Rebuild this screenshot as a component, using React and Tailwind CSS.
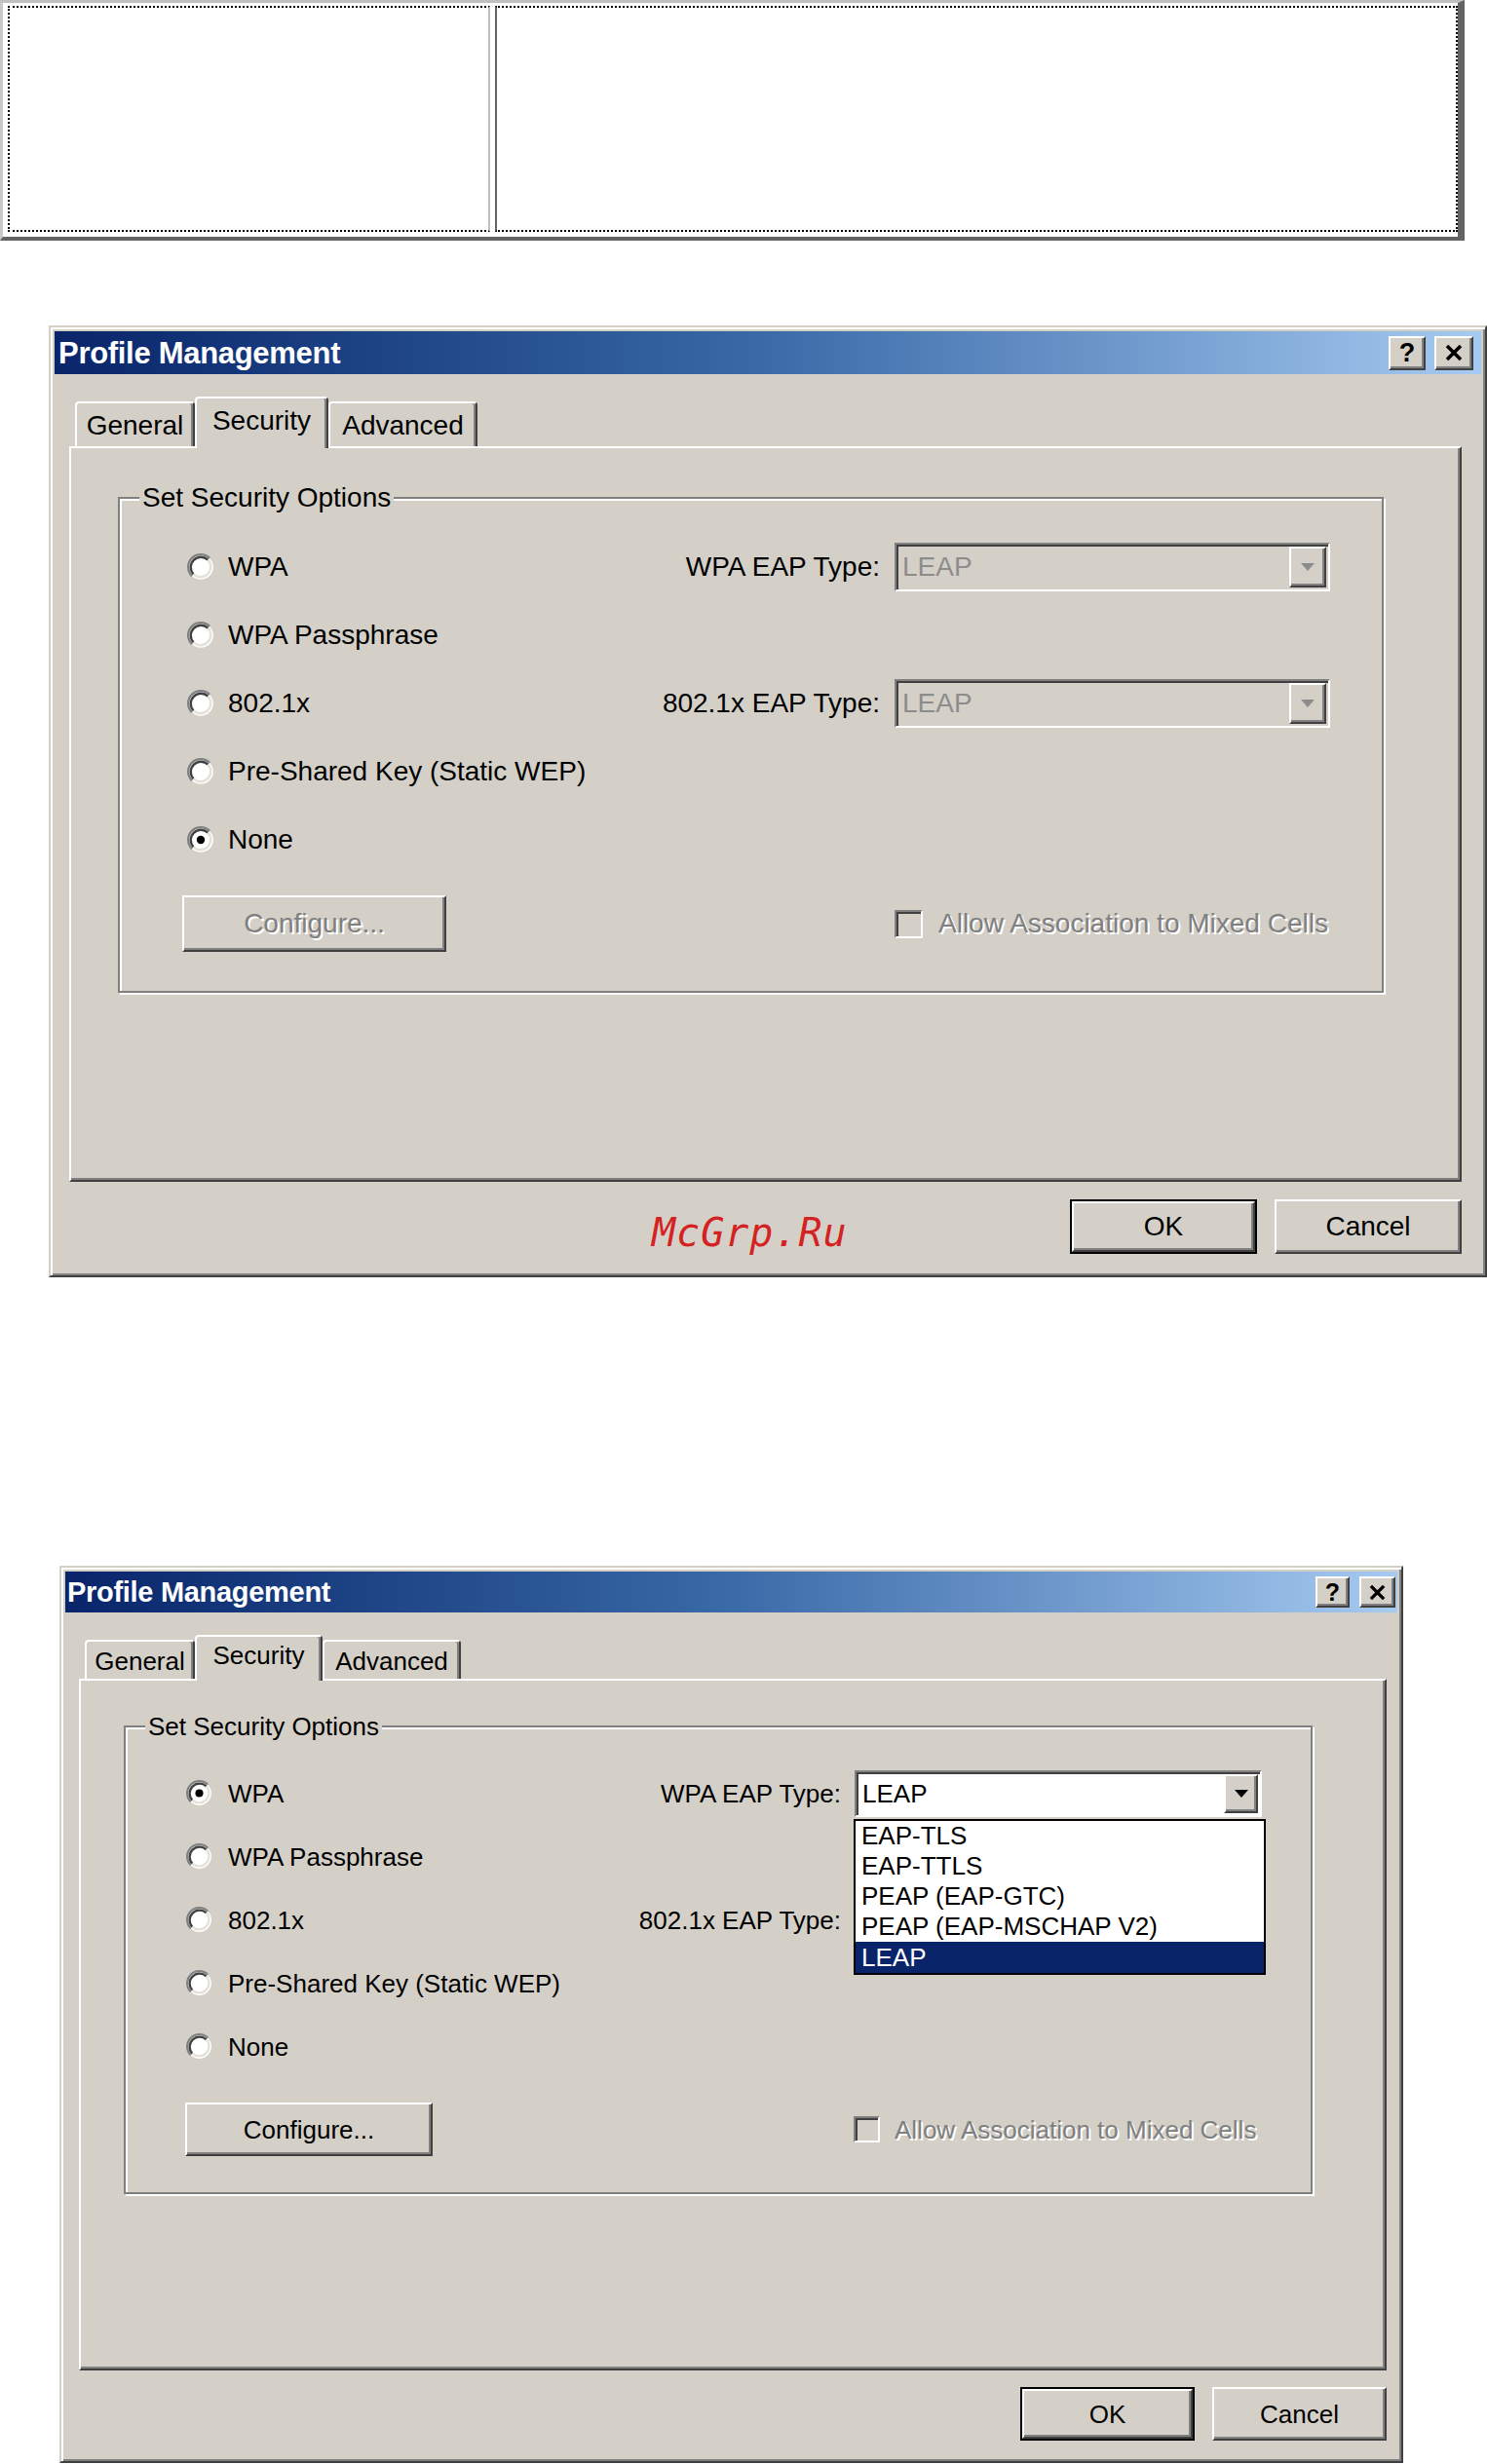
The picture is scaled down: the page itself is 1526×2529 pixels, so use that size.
import React from "react";

const raised =
  "border-2 border-t-white border-l-white border-r-[#404040] border-b-[#404040] shadow-[inset_-2px_-2px_0_#808080] bg-[#d4d0c8]";
const sunken =
  "border-2 border-t-[#808080] border-l-[#808080] border-r-white border-b-white shadow-[inset_2px_2px_0_#404040]";
const disabledText = "text-[#808080] [text-shadow:2px_2px_0_#ffffff]";

function Radio({ size, checked }) {
  return (
    <svg width={size} height={size} viewBox="0 0 24 24" className="shrink-0">
      <circle cx="12" cy="12" r="11" fill="#ffffff" />
      <path d="M19.78 4.22 A11 11 0 0 0 4.22 19.78" fill="none" stroke="#808080" strokeWidth="2" />
      <path d="M18.36 5.64 A9 9 0 0 0 5.64 18.36" fill="none" stroke="#404040" strokeWidth="2" />
      <path d="M5.64 18.36 A9 9 0 0 0 18.36 5.64" fill="none" stroke="#e4e1da" strokeWidth="2" />
      {checked && <circle cx="12" cy="12" r="3.6" fill="#000000" />}
    </svg>
  );
}

function Arrow({ color }) {
  return (
    <svg width="14" height="8" viewBox="0 0 14 8">
      <path d="M0 0 L14 0 L7 8 Z" fill={color} />
    </svg>
  );
}

function Combo({ d1, enabled, open }) {
  return (
    <div
      className={
        (d1 ? "ml-[15px] w-[447px] h-[50px] " : "ml-[14px] w-[418px] h-[48px] ") +
        sunken +
        " relative flex items-stretch p-[2px] " +
        (enabled ? "bg-white" : "bg-[#d4d0c8]")
      }
    >
      <div
        className={
          "flex-1 flex items-center pl-[4px] leading-none " +
          (enabled ? "text-black" : "text-[#8c8c8c]")
        }
      >
        LEAP
      </div>
      <div className={(d1 ? "w-[38px] " : "w-[35px] ") + raised + " flex items-center justify-center"}>
        <Arrow color={enabled ? "#000000" : "#8c8c8c"} />
      </div>
      {open && (
        <div className="absolute top-full mt-[4px] left-[-3px] w-[423px] z-20 bg-white border-2 border-black text-[26px] leading-none">
          {["EAP-TLS", "EAP-TTLS", "PEAP (EAP-GTC)", "PEAP (EAP-MSCHAP V2)"].map((t) => (
            <div key={t} className="h-[31px] flex items-center pl-[6px] text-black">
              {t}
            </div>
          ))}
          <div className="h-[32px] flex items-center pl-[6px] bg-[#0a246a] text-white">LEAP</div>
        </div>
      )}
    </div>
  );
}

function Checkbox({ d1 }) {
  return <div className={(d1 ? "w-[29px] h-[29px] " : "w-[27px] h-[27px] ") + sunken + " bg-[#d4d0c8] shrink-0"} />;
}

function Tab({ cls, selected, children }) {
  return (
    <div
      className={
        cls +
        " flex items-center justify-center rounded-t-[4px] border-t-2 border-l-2 border-r-2 border-t-white border-l-white border-r-[#404040] shadow-[inset_-2px_0_0_#808080] bg-[#d4d0c8] " +
        (selected ? "relative z-10 -mb-[2px] pb-[6px]" : "pt-[2px]")
      }
    >
      {children}
    </div>
  );
}

function Row({ d1, checked, label, right, combo }) {
  return (
    <div className={(d1 ? "h-[70px]" : "h-[65px]") + " flex items-center"}>
      <div className={(d1 ? "w-[475px] pl-[5px] gap-[14px]" : "w-[450px] pl-[1px] gap-[16px]") + " flex items-center shrink-0"}>
        <Radio size={d1 ? 28 : 27} checked={checked} />
        <span className="leading-none whitespace-nowrap">{label}</span>
      </div>
      {right && (
        <>
          <div className={(d1 ? "w-[241px]" : "w-[223px]") + " text-right leading-none whitespace-nowrap shrink-0"}>{right}</div>
          {combo}
        </>
      )}
    </div>
  );
}

function Dialog({ v }) {
  const d1 = v === 1;
  return (
    <div
      className={
        (d1 ? "w-[1476px] h-[977px] text-[28px]" : "w-[1379px] h-[921px] text-[26px]") +
        " flex flex-col bg-[#d4d0c8] text-black border-2 border-t-[#d4d0c8] border-l-[#d4d0c8] border-r-[#404040] border-b-[#404040] shadow-[inset_2px_2px_0_#ffffff,inset_-2px_-2px_0_#808080] p-[4px]"
      }
    >
      {/* Title bar */}
      <div
        className={
          (d1 ? "h-[44px] pr-[8px] pl-[4px]" : "h-[42px] pr-[2px] pl-[2px]") +
          " shrink-0 flex items-center bg-linear-to-r from-[#0a246a] via-[#3a6aa8] to-[#a6caf0]"
        }
      >
        <div className={(d1 ? "text-[31px]" : "text-[29px]") + " flex-1 font-bold text-white leading-none tracking-[-0.3px]"}>
          Profile Management
        </div>
        <div className={(d1 ? "gap-[9px]" : "gap-[10px]") + " flex"}>
          <div className={(d1 ? "w-[38px] h-[35px] text-[27px]" : "w-[35px] h-[32px] text-[25px]") + " " + raised + " flex items-center justify-center font-bold leading-none"}>
            ?
          </div>
          <div className={(d1 ? "w-[40px] h-[35px]" : "w-[37px] h-[32px]") + " " + raised + " flex items-center justify-center"}>
            <svg width={d1 ? 18 : 17} height={d1 ? 18 : 17} viewBox="0 0 18 18">
              <path d="M2 2 L16 16 M16 2 L2 16" stroke="#000000" strokeWidth="3.6" />
            </svg>
          </div>
        </div>
      </div>

      {/* Tabs */}
      <div className={(d1 ? "mt-[23px] ml-[21px] h-[51px]" : "mt-[23px] ml-[20px] h-[45px]") + " shrink-0 flex items-end"}>
        <Tab cls={d1 ? "w-[123px] h-[46px]" : "w-[113px] h-[40px]"}>General</Tab>
        <Tab cls={d1 ? "w-[137px] h-[53px]" : "w-[131px] h-[47px]"} selected>
          Security
        </Tab>
        <Tab cls={d1 ? "w-[153px] h-[46px]" : "w-[142px] h-[40px]"}>Advanced</Tab>
      </div>

      {/* Panel */}
      <div
        className={
          (d1 ? "ml-[15px] w-[1429px] h-[755px]" : "ml-[14px] w-[1342px] h-[710px]") +
          " shrink-0 border-2 border-t-white border-l-white border-r-[#404040] border-b-[#404040] shadow-[inset_-2px_-2px_0_#808080]"
        }
      >
        <div
          className={
            (d1 ? "ml-[48px] mt-[50px] w-[1299px] h-[509px] pt-[35px] pl-[64px]" : "ml-[44px] mt-[46px] w-[1220px] h-[481px] pt-[35px] pl-[61px]") +
            " relative border-2 border-[#808080] shadow-[inset_2px_2px_0_#ffffff,2px_2px_0_#ffffff]"
          }
        >
          <div className="absolute -top-[17px] left-[20px] px-[3px] bg-[#d4d0c8] leading-[32px] whitespace-nowrap">
            Set Security Options
          </div>
          <Row d1={d1} checked={!d1} label="WPA" right="WPA EAP Type:" combo={<Combo d1={d1} enabled={!d1} open={!d1} />} />
          <Row d1={d1} label="WPA Passphrase" />
          <Row
            d1={d1}
            label="802.1x"
            right="802.1x EAP Type:"
            combo={d1 ? <Combo d1={d1} enabled={false} /> : <div className="ml-[14px] w-[418px] h-[48px]" />}
          />
          <Row d1={d1} label="Pre-Shared Key (Static WEP)" />
          <Row d1={d1} checked={d1} label="None" />
          <div className={(d1 ? "mt-[22px]" : "mt-[25px]") + " flex items-center"}>
            <div
              className={
                (d1 ? "w-[271px] h-[58px] " + disabledText : "w-[254px] h-[55px] text-black") +
                " " + raised + " flex items-center justify-center leading-none shrink-0"
              }
            >
              Configure...
            </div>
            <div className={(d1 ? "ml-[460px] gap-[16px]" : "ml-[432px] gap-[15px]") + " flex items-center"}>
              <Checkbox d1={d1} />
              <span className={disabledText + " leading-none whitespace-nowrap"}>Allow Association to Mixed Cells</span>
            </div>
          </div>
        </div>
      </div>

      {/* Buttons */}
      <div className={(d1 ? "ml-[15px] w-[1429px] mt-[18px]" : "ml-[14px] w-[1342px] mt-[17px]") + " shrink-0 flex items-center"}>
        {d1 && (
          <span className="ml-[598px] mt-[12px] text-[#d42222] italic font-['DejaVu_Sans_Mono',monospace] text-[40px] tracking-[1px] leading-none">
            McGrp.Ru
          </span>
        )}
        <div className="ml-auto flex gap-[18px]">
          <div className={(d1 ? "w-[192px] h-[56px]" : "w-[179px] h-[55px]") + " border-2 border-black flex"}>
            <div className={raised + " flex-1 flex items-center justify-center leading-none"}>OK</div>
          </div>
          <div className={(d1 ? "w-[192px] h-[56px]" : "w-[179px] h-[55px]") + " " + raised + " flex items-center justify-center leading-none"}>
            Cancel
          </div>
        </div>
      </div>
    </div>
  );
}

export default function App() {
  return (
    <div className="w-[1526px] h-[2529px] bg-white overflow-hidden font-['Liberation_Sans',Arial,sans-serif]">
      <div className="w-[1503px] h-[247px] border-t-[3px] border-l-[3px] border-r-[7px] border-b-[4px] border-t-[#c0c0c0] border-l-[#c8c8c8] border-r-[#636363] border-b-[#636363] pt-[3px] pl-[5px] pb-[5px] flex gap-[5px]">
        <div className="w-[495px] h-full border-2 border-dotted border-black [border-right-style:solid] border-r-[#c0c0c0]" />
        <div className="flex-1 h-full border-2 border-dotted border-black [border-left-style:solid] border-l-[#636363]" />
      </div>
      <div className="pt-[87px] pl-[50px]">
        <Dialog v={1} />
      </div>
      <div className="pt-[296px] pl-[61px]">
        <Dialog v={2} />
      </div>
    </div>
  );
}
